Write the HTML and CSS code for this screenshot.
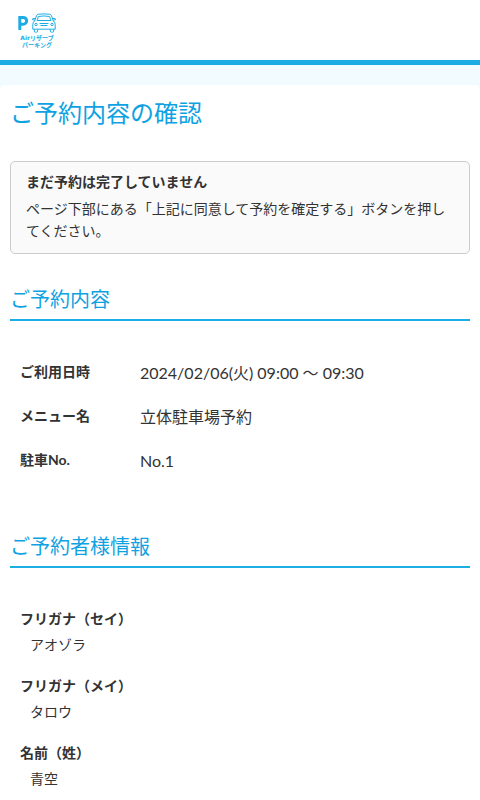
FILE: index.html
```html
<!DOCTYPE html>
<html lang="ja">
<head>
    <meta charset="UTF-8">
    <meta name="viewport" content="width=device-width, initial-scale=1.0">
    <title>ご予約内容の確認</title>
    <link rel="stylesheet" href="styles.css">
</head>
<body>
    <header class="header">
        <a href="#" class="logo">
            <svg class="logo-mark" viewBox="0 0 38 22" aria-hidden="true">
                <path class="logo-p" d="M1.800 18V5.400H5.200a3.300 3.300 0 0 1 0 6.800H2"/>
                <g class="logo-car">
                    <path d="M16.500 9.200L18.600 3.600Q19 2.500 20.200 2.300Q26 1.400 31.800 2.300Q33 2.500 33.400 3.600L35.500 9.200"/>
                    <path d="M19 8.500L20.500 4.500Q26 3.400 31.500 4.500L33 8.500Z"/>
                    <path d="M17 8.500Q14.800 10 14.800 12.500V17.200H37.200V12.500Q37.200 10 35 8.500"/>
                    <path d="M17 6.500H15.200Q14.200 6.600 14.500 7.700L16.500 8M35 6.500H36.800Q37.800 6.600 37.500 7.700L35.500 8"/>
                    <path d="M16.300 17.500V19Q16.300 20.200 17.500 20.200H18.500Q19.700 20.200 19.700 19V17.500M32.300 17.500V19Q32.300 20.200 33.500 20.200H34.500Q35.700 20.200 35.700 19V17.500"/>
                    <path d="M21.500 11.500H30.500M22.500 13.500H29.500"/>
                    <circle cx="18" cy="12.500" r="1.200"/>
                    <circle cx="34" cy="12.500" r="1.200"/>
                </g>
            </svg>
            <span class="logo-text">Airリザーブ<br>パーキング</span>
        </a>
    </header>

    <main class="content">
        <h1>ご予約内容の確認</h1>

        <div class="notice">
            <p class="notice-title">まだ予約は完了していません</p>
            <p>ページ下部にある「上記に同意して予約を確定する」ボタンを押してください。</p>
        </div>

        <section class="section">
            <h2>ご予約内容</h2>
            <dl class="details">
                <dt>ご利用日時</dt>
                <dd>2024/02/06(火) 09:00 〜 09:30</dd>
                <dt>メニュー名</dt>
                <dd>立体駐車場予約</dd>
                <dt>駐車No.</dt>
                <dd>No.1</dd>
            </dl>
        </section>

        <section class="section">
            <h2>ご予約者様情報</h2>
            <dl class="customer">
                <dt>フリガナ（セイ）</dt>
                <dd>アオゾラ</dd>
                <dt>フリガナ（メイ）</dt>
                <dd>タロウ</dd>
                <dt>名前（姓）</dt>
                <dd>青空</dd>
            </dl>
        </section>
    </main>
</body>
</html>
```
FILE: styles.css
```css
* {
    box-sizing: border-box;
}
body {
    margin: 0;
    background: #f2fbff;
    color: #333;
    font-family: Lato, "Noto Sans CJK JP", sans-serif;
    font-size: 14px;
    line-height: 22px;
}
h1, h2, p, dl, dd {
    margin: 0;
}

/* header */
.header {
    display: flex;
    height: 65px;
    padding: 12px 18px 0;
    background: #fff;
    border-bottom: 5px solid #1cade4;
}
.logo {
    display: flex;
    flex-direction: column;
    align-items: center;
    color: #1cade4;
    text-decoration: none;
}
.logo-mark {
    width: 38px;
    height: 22px;
    fill: none;
    stroke: currentColor;
}
.logo-p {
    stroke-width: 3;
}
.logo-car {
    stroke-width: 1;
}
.logo-text {
    font-family: "DejaVu Sans", "Noto Sans CJK JP", sans-serif;
    font-size: 6px;
    font-weight: bold;
    line-height: 7px;
    text-align: center;
}

/* content */
.content {
    margin-top: 20px;
    padding: 10px;
    background: #fff;
    border-radius: 5px;
}
h1, h2 {
    color: #0ea2e2;
    font-weight: 400;
}
h1 {
    font-size: 24px;
    line-height: 36px;
}
.notice {
    margin-top: 30px;
    padding: 9px 15px 11px;
    background: #fafafa;
    border: 1px solid #ccc;
    border-radius: 5px;
}
.notice-title {
    margin-bottom: 5px;
    font-weight: bold;
}
.section {
    margin-top: 30px;
}
h2 {
    padding-bottom: 5px;
    border-bottom: 2px solid #1cade4;
    font-size: 20px;
    line-height: 30px;
}
dt {
    font-weight: bold;
}
.details {
    display: grid;
    grid-template-columns: 120px 1fr;
    row-gap: 20px;
    padding: 40px 10px 28px;
}
.details dd {
    font-size: 16px;
    line-height: 24px;
}
.customer {
    padding: 40px 10px 0;
}
.customer dd {
    margin: 4px 0 19px;
    padding-left: 10px;
}
```
